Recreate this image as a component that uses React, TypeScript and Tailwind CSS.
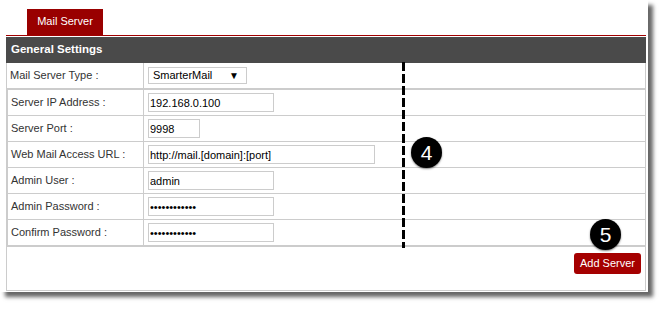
import React from "react";

interface FieldRow {
    label: string;
    value: string;
    width: string;
    type?: string;
}

const rows: FieldRow[] = [
    { label: "Server IP Address :", value: "192.168.0.100", width: "w-[126px]" },
    { label: "Server Port :", value: "9998", width: "w-[52px]" },
    { label: "Web Mail Access URL :", value: "http://mail.[domain]:[port]", width: "w-[227px]" },
    { label: "Admin User :", value: "admin", width: "w-[126px]" },
    { label: "Admin Password :", value: "adminpass123", width: "w-[126px]", type: "password" },
    { label: "Confirm Password :", value: "adminpass123", width: "w-[126px]", type: "password" },
];

const Step = ({ n, className }: { n: string; className: string }) => (
    <div
        className={`absolute w-[31px] h-[31px] rounded-full bg-black text-white flex items-center justify-center text-[21px] leading-none shadow-[0_1px_2px_rgba(0,0,0,0.5)] ${className}`}
    >
        {n}
    </div>
);

const App = () => {
    return (
        <div className="relative w-[666px] h-[310px] bg-white font-['Liberation_Sans',Arial,sans-serif] text-[#333333]">
            <div className="w-[648px] h-[292px] bg-white shadow-[5px_5px_4px_rgba(0,0,0,0.6)] pt-[9px] pl-[6px]">
                <div className="w-[640px]">
                    {/* tab strip */}
                    <div className="pl-[21px] border-b border-[#a00000]">
                        <div className="w-[76px] h-[26px] bg-[#990000] text-white text-[11px] text-center pt-[4px]">
                            Mail Server
                        </div>
                    </div>

                    <div className="mt-[1px] h-[26px] bg-[#4a4a4a] text-white font-bold text-[11.5px] flex items-center pl-[5px]">
                        General Settings
                    </div>

                    <div className="border-x border-b border-[#cccccc]">
                        <div className="flex h-[26px] border-b border-[#cccccc] text-[11px]">
                            <div className="w-[137px] pl-[3px] border-r border-[#cccccc] flex items-center">
                                Mail Server Type :
                            </div>
                            <div className="flex items-center pl-[4px]">
                                <div className="w-[99px] h-[17px] border border-[#cccccc] flex items-center justify-between pl-[4px] pr-[7px] text-black">
                                    <span>SmarterMail</span>
                                    <span className="text-[10px]">▼</span>
                                </div>
                            </div>
                        </div>

                        <div className="border-l border-t border-b border-[#cccccc]">
                            {rows.map((r) => (
                                <div key={r.label} className="flex h-[26px] border-b border-[#cccccc] text-[11px]">
                                    <div className="w-[136px] pl-[3px] border-r border-[#cccccc] flex items-center">
                                        {r.label}
                                    </div>
                                    <div className="flex items-center pl-[4px]">
                                        <input
                                            readOnly
                                            type={r.type || "text"}
                                            value={r.value}
                                            className={`${r.width} h-[19px] border border-[#cccccc] pl-[1px] text-[11px] text-black outline-none font-['Liberation_Sans',Arial,sans-serif]`}
                                        />
                                    </div>
                                </div>
                            ))}
                        </div>

                        <div className="h-[43px] flex justify-end items-start pt-[6px] pr-[4px]">
                            <button className="h-[21px] px-[6px] bg-[#a50000] text-white text-[11px] rounded-[3px]">
                                Add Server
                            </button>
                        </div>
                    </div>
                </div>
            </div>

            {/* annotations */}
            <div className="absolute left-[402px] top-[62px] w-[3px] h-[186px] bg-[repeating-linear-gradient(to_bottom,#000_0px,#000_9px,transparent_9px,transparent_12px)]" />
            <Step n="4" className="left-[411px] top-[137px]" />
            <Step n="5" className="left-[590px] top-[219px]" />
        </div>
    );
};

export default App;
